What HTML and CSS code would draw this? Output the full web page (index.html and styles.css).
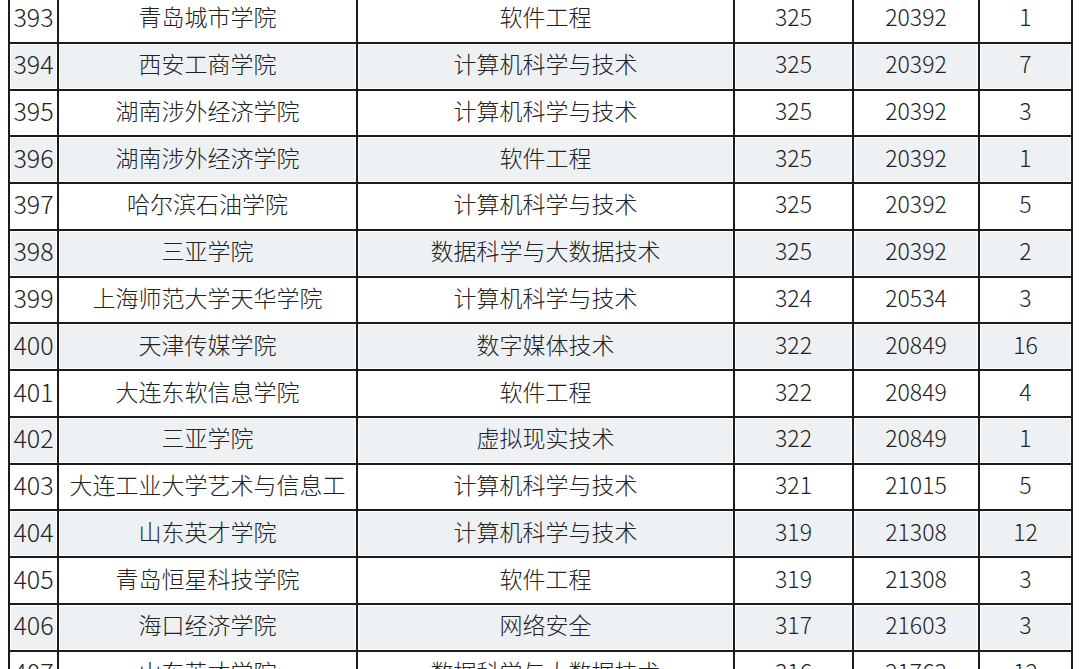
FILE: index.html
```html
<!DOCTYPE html>
<html lang="zh-CN">
<head>
<meta charset="utf-8">
<link rel="stylesheet" href="styles.css">
</head>
<body>
<table class="rank">
  <colgroup>
    <col class="c-no"><col class="c-school"><col class="c-major"><col class="c-score"><col class="c-rank"><col class="c-num">
  </colgroup>
  <tbody>
    <tr><td class="no">393</td><td>青岛城市学院</td><td>软件工程</td><td>325</td><td>20392</td><td>1</td></tr>
    <tr class="alt"><td class="no">394</td><td>西安工商学院</td><td>计算机科学与技术</td><td>325</td><td>20392</td><td>7</td></tr>
    <tr><td class="no">395</td><td>湖南涉外经济学院</td><td>计算机科学与技术</td><td>325</td><td>20392</td><td>3</td></tr>
    <tr class="alt"><td class="no">396</td><td>湖南涉外经济学院</td><td>软件工程</td><td>325</td><td>20392</td><td>1</td></tr>
    <tr><td class="no">397</td><td>哈尔滨石油学院</td><td>计算机科学与技术</td><td>325</td><td>20392</td><td>5</td></tr>
    <tr class="alt"><td class="no">398</td><td>三亚学院</td><td>数据科学与大数据技术</td><td>325</td><td>20392</td><td>2</td></tr>
    <tr><td class="no">399</td><td>上海师范大学天华学院</td><td>计算机科学与技术</td><td>324</td><td>20534</td><td>3</td></tr>
    <tr class="alt"><td class="no">400</td><td>天津传媒学院</td><td>数字媒体技术</td><td>322</td><td>20849</td><td>16</td></tr>
    <tr><td class="no">401</td><td>大连东软信息学院</td><td>软件工程</td><td>322</td><td>20849</td><td>4</td></tr>
    <tr class="alt"><td class="no">402</td><td>三亚学院</td><td>虚拟现实技术</td><td>322</td><td>20849</td><td>1</td></tr>
    <tr><td class="no">403</td><td>大连工业大学艺术与信息工</td><td>计算机科学与技术</td><td>321</td><td>21015</td><td>5</td></tr>
    <tr class="alt"><td class="no">404</td><td>山东英才学院</td><td>计算机科学与技术</td><td>319</td><td>21308</td><td>12</td></tr>
    <tr><td class="no">405</td><td>青岛恒星科技学院</td><td>软件工程</td><td>319</td><td>21308</td><td>3</td></tr>
    <tr class="alt"><td class="no">406</td><td>海口经济学院</td><td>网络安全</td><td>317</td><td>21603</td><td>3</td></tr>
    <tr><td class="no">407</td><td>山东英才学院</td><td>数据科学与大数据技术</td><td>316</td><td>21763</td><td>12</td></tr>
  </tbody>
</table>
</body>
</html>
```

FILE: styles.css
```css
html, body {
  margin: 0;
  padding: 0;
  background: #ffffff;
  overflow: hidden;
}

.rank {
  margin: -5px 0 0 8px;
  border-collapse: collapse;
  table-layout: fixed;
  width: 1065px;
  font-family: "Noto Sans CJK SC", "Noto Sans", sans-serif;
  font-weight: 300;
  color: #222222;
}

.c-no { width: 49px; }
.c-school { width: 299px; }
.c-major { width: 377px; }
.c-score { width: 119px; }
.c-rank { width: 126px; }
.c-num { width: 93px; }

.rank td {
  border: 2px solid #1c1c1c;
  height: 38.77px;
  padding: 0 0 6px;
  text-align: center;
  vertical-align: middle;
  font-size: 23px;
  line-height: 28px;
  white-space: nowrap;
  overflow: hidden;
}

.rank td.no {
  font-size: 25px;
}

.rank tr.alt td {
  background: #eef1f4;
  box-shadow: inset 0 0 0 1px #ffffff;
}
```
